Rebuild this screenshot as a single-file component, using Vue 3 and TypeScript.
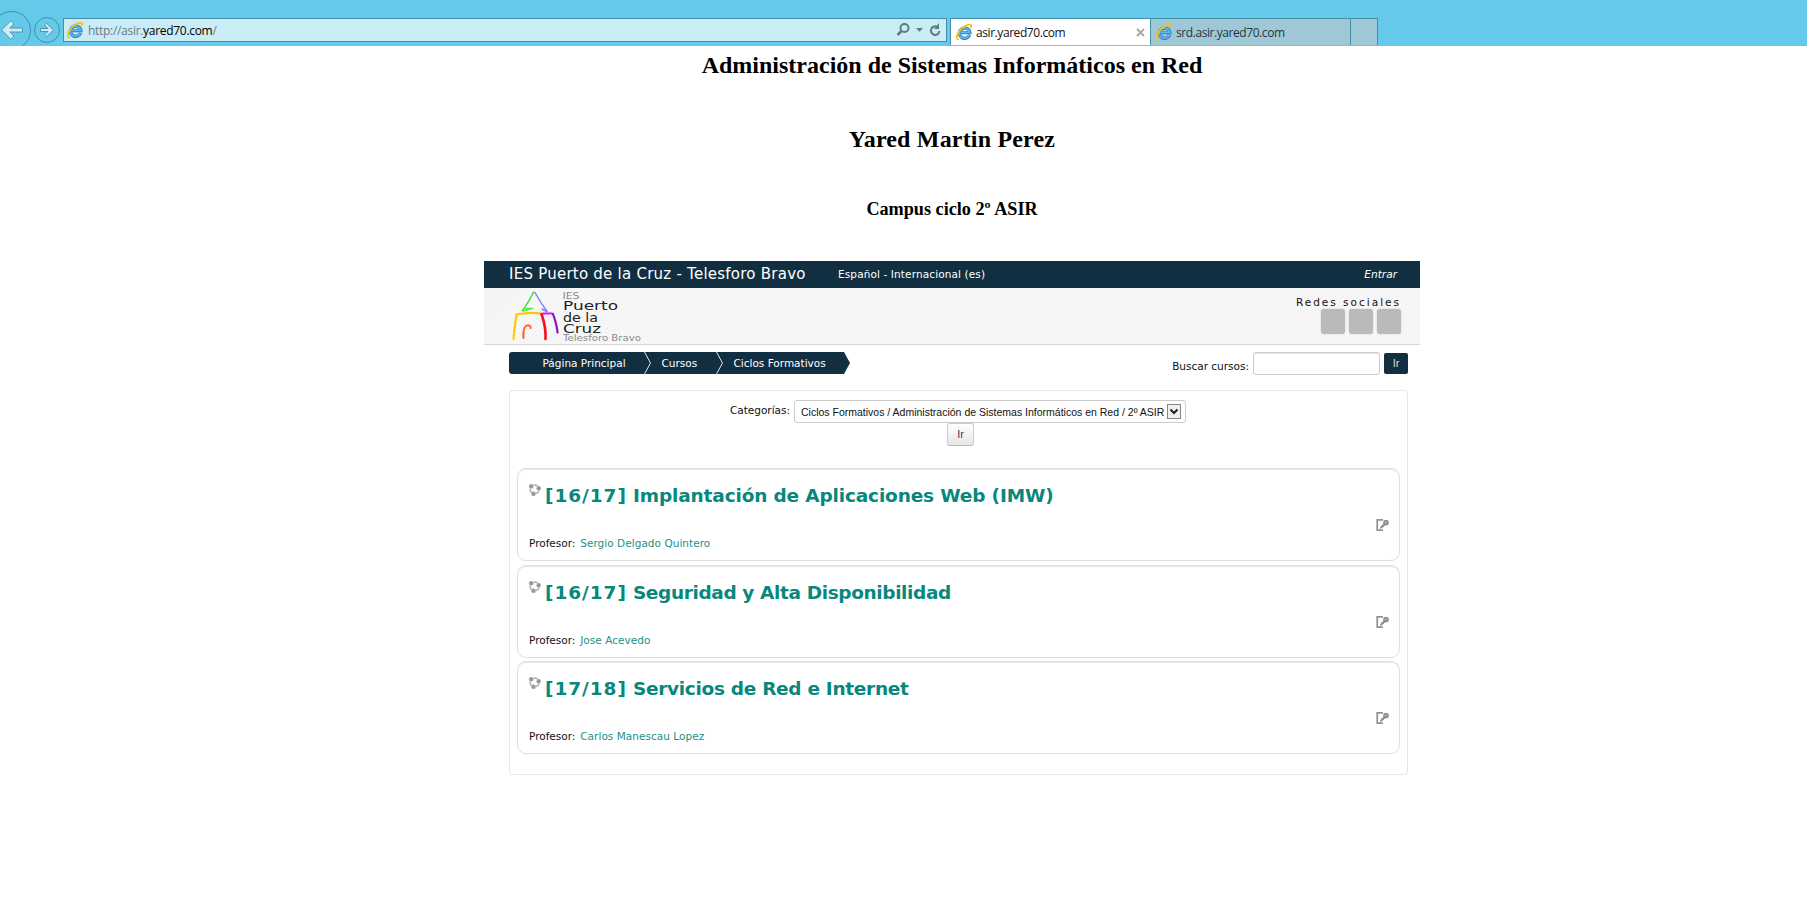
<script setup lang="ts">
interface Course {
  term: string
  title: string
  teacher: string
  code: string
}

const crumbs: string[] = ['Página Principal', 'Cursos', 'Ciclos Formativos']

const courses: Course[] = [
  { term: '[16/17]', title: 'Implantación de Aplicaciones Web (IMW)', teacher: 'Sergio Delgado Quintero', code: 'imw' },
  { term: '[16/17]', title: 'Seguridad y Alta Disponibilidad', teacher: 'Jose Acevedo', code: 'sad' },
  { term: '[17/18]', title: 'Servicios de Red e Internet', teacher: 'Carlos Manescau Lopez', code: 'sri' },
]

const tabs: { label: string; active: boolean }[] = [
  { label: 'asir.yared70.com', active: true },
  { label: 'srd.asir.yared70.com', active: false },
]
</script>

<template>
  <div class="page">
    <svg width="0" height="0" class="defs">
      <symbol id="ie" viewBox="0 0 16 16">
        <path d="M13.600 10.800A5.200 5.200 0 1 1 13.800 8.600H4.600" fill="none" stroke="#2f86c4" stroke-width="3.400" />
        <path d="M13.400 10.600A5.200 5.200 0 1 1 13.600 8.400H4.600" fill="none" stroke="#62b8ea" stroke-width="1.700" />
        <path d="M2.800 15.200C-1 15.600 1 8.600 5.400 4.600 9.600 .6 14.800-.4 15.200 1.600c.1.800 0 1.600-.3 2.400" fill="none" stroke="#f7c11a" stroke-width="1.800" />
      </symbol>
    </svg>

    <header class="chrome">
      <svg class="nav-btns" width="63" height="46" viewBox="0 0 63 46" fill="none">
        <circle cx="11.500" cy="30.500" r="19" stroke="#3f8fae" />
        <path d="M22.500 28H9.800L14 24 11 20.500 1.500 30 11 39.500 14 36 9.800 32H22.500Z" fill="#cdeef8" stroke="#4a94b0" />
        <circle cx="47" cy="30" r="12.500" stroke="#3f8fae" />
        <path d="M40.500 28.500H48L44.500 25 46.500 23.300 53.500 30 46.500 36.700 44.500 35 48 31.500H40.500Z" fill="#cdeef8" stroke="#4a94b0" />
      </svg>
      <div class="address">
        <svg class="ie" width="16" height="16"><use href="#ie" /></svg>
        <span class="url">http://asir.<b>yared70.com</b>/</span>
        <svg class="tools" width="46" height="16" viewBox="0 0 46 16" fill="none" stroke="#5d7b86">
          <circle cx="8.500" cy="6" r="4" stroke-width="2" />
          <path d="M5.500 9 1.500 13" stroke-width="2.500" />
          <path d="M20 6h7l-3.500 3.800z" fill="#5d7b86" stroke="none" />
          <path d="M41.500 5A4.300 4.300 0 1 0 43.500 9" stroke-width="2" />
          <path d="M43 1v6h-5z" fill="#5d7b86" stroke="none" />
        </svg>
      </div>
      <nav class="tabs">
        <div v-for="tab in tabs" :key="tab.label" class="tab" :class="{ active: tab.active }">
          <svg class="ie" width="16" height="16"><use href="#ie" /></svg>
          <span class="tab-label">{{ tab.label }}</span>
          <svg v-if="tab.active" class="close" width="9" height="9" viewBox="0 0 9 9"><path d="M1 1l7 7M8 1L1 8" stroke="#a9a9a9" stroke-width="2" /></svg>
        </div>
        <div class="tab new-tab"></div>
      </nav>
    </header>

    <main class="body">
      <h1 class="school">Administración de Sistemas Informáticos en Red</h1>
      <h1 class="author">Yared Martin Perez</h1>
      <h2 class="subtitle">Campus ciclo 2º ASIR</h2>

      <section class="campus">
        <div class="topbar">
          <span class="site">IES Puerto de la Cruz - Telesforo Bravo</span>
          <span class="lang">Español - Internacional (es)</span>
          <span class="login">Entrar</span>
        </div>
        <div class="banner">
          <svg class="logo" width="140" height="56" viewBox="0 0 140 56" fill="none">
            <g stroke-linecap="round">
              <path d="M24.500 4C21 12 17 17 13.500 23" stroke="#3be03b" stroke-width="1.500" />
              <path d="M13.500 23L23.500 20.500M17 20.500h5" stroke="#4bf04b" stroke-width="1.700" />
              <path d="M26 4.500C30 12 34 18 38.500 24L33 21" stroke="#8585f2" stroke-width="1.500" />
              <path d="M4.500 51C5 43 6.500 34 7.500 26.500 16 24.800 24 24.500 32 25.500" stroke="#ffc60a" stroke-width="2.200" />
              <path d="M32.500 26C36 36 37 43 36.500 51" stroke="#f90c1c" stroke-width="2.600" />
              <path d="M34 25.500H43" stroke="#f20af2" stroke-width="2" />
              <path d="M44 26C46 32 48 37 48.500 44.500" stroke="#8f10c8" stroke-width="2.200" />
              <path d="M14.500 50C14 42 15.500 38 18 37.500 20 37 22 38 21.500 40" stroke="#fb6a3c" stroke-width="2.200" />
            </g>
            <g fill="#222" class="logo-text">
              <text x="53.500" y="11" font-size="9" textLength="17" lengthAdjust="spacingAndGlyphs" fill="#8a8a8a">IES</text>
              <text x="54" y="22" font-size="12" textLength="55" lengthAdjust="spacingAndGlyphs">Puerto</text>
              <text x="54" y="33.500" font-size="12" textLength="35" lengthAdjust="spacingAndGlyphs">de la</text>
              <text x="54" y="45" font-size="12" textLength="38" lengthAdjust="spacingAndGlyphs">Cruz</text>
              <text x="54" y="52.500" font-size="8" textLength="78" lengthAdjust="spacingAndGlyphs" fill="#8a8a8a">Telesforo Bravo</text>
            </g>
          </svg>
          <div class="social">
            <span class="social-label">Redes sociales</span>
            <div class="social-row"><i></i><i></i><i></i></div>
          </div>
        </div>

        <div class="crumb-row">
          <svg class="crumb-bg" width="341" height="22" viewBox="0 0 341 22">
            <path d="M3 0H335L341 11 335 22H3Q0 22 0 19V3Q0 0 3 0Z" fill="#122f41" />
            <path d="M135.500 0L141.500 11 135.500 22M207.500 0L213.500 11 207.500 22" fill="none" stroke="#dfe5e8" />
          </svg>
          <ul class="crumbs">
            <li v-for="crumb in crumbs" :key="crumb">{{ crumb }}</li>
          </ul>
          <div class="search">
            <label>Buscar cursos:</label>
            <span class="field"></span>
            <span class="go">Ir</span>
          </div>
        </div>

        <div class="panel">
          <div class="category">
            <label>Categorías:</label>
            <div class="select">
              <span>Ciclos Formativos / Administración de Sistemas Informáticos en Red / 2º ASIR</span>
              <svg width="14" height="15" viewBox="0 0 14 15"><rect x=".5" y=".5" width="13" height="14" fill="#efefef" stroke="#858585" /><path d="M3.500 5.500L7 9l3.500-3.500" fill="none" stroke="#222" stroke-width="2" /></svg>
            </div>
          </div>
          <div class="submit">Ir</div>

          <div class="courses">
            <article v-for="course in courses" :key="course.code" class="course">
              <div class="heading">
                <svg width="12" height="12" viewBox="0 0 12 12" fill="#999">
                  <circle cx="2.200" cy="2.200" r="2.200" /><circle cx="9.700" cy="4.200" r="2.200" /><circle cx="4.500" cy="9.700" r="2.300" />
                  <path d="M4.500 1.300Q7 .6 8.500 2M1.300 4.500Q.8 7 2.500 8.800M7 9.700Q9.500 9 10 6.500" fill="none" stroke="#aaa" stroke-width="1.400" />
                </svg>
                <h3 :class="course.code"><span class="term">{{ course.term }}</span> {{ course.title }}</h3>
              </div>
              <svg class="enter" width="13" height="12" viewBox="0 0 13 12" fill="none" stroke="#939393">
                <path d="M7 .9H1.200V11.100H7" stroke-width="1.700" />
                <path d="M4.200 9.200L5 7.500 9 3.600 10 5 6.500 8.500Z" fill="#939393" stroke-width="1" />
                <circle cx="10" cy="3.600" r="1.700" stroke-width="2.400" />
              </svg>
              <p>Profesor: <a>{{ course.teacher }}</a></p>
            </article>
          </div>
        </div>
      </section>
    </main>
  </div>
</template>

<style>
body {
  margin: 0;
  background: #fff;
}
</style>

<style scoped>
.page {
  position: relative;
  width: 1807px;
  height: 922px;
  overflow: hidden;
  background: #fff;
  color: #111;
}
.page * {
  box-sizing: border-box;
}
.defs {
  position: absolute;
}
.chrome {
  display: flex;
  height: 46px;
  background: #65caea;
  font: 12px/16px "Open Sans", "Noto Sans", sans-serif;
}
.nav-btns {
  display: block;
  flex: none;
}
.address {
  display: flex;
  align-items: center;
  width: 884px;
  height: 24px;
  margin-top: 18px;
  padding: 0 3px;
  border: 1px solid #468fa8;
  background: #c9ecf6;
}
.ie {
  flex: none;
}
.url {
  margin: 2px 0 0 5px;
  color: #6c7c82;
  letter-spacing: -0.300px;
  white-space: nowrap;
}
.url b {
  color: #000;
  font-weight: 400;
}
.tools {
  margin-left: auto;
  margin-right: 1px;
}
.tabs {
  display: flex;
  height: 27px;
  margin: 18px 0 0 3px;
}
.tab {
  display: flex;
  align-items: center;
  width: 200px;
  padding-left: 5px;
  border-top: 1px solid #468fa8;
  border-left: 1px solid #468fa8;
  background: #9fc7d6;
  color: #26383f;
}
.tab.active {
  background: #fff;
  color: #111;
}
.tab-label {
  margin: 2px 0 0 4px;
  letter-spacing: -0.430px;
  white-space: nowrap;
}
.close {
  margin: 0 5px 0 auto;
}
.new-tab {
  width: 28px;
  border-right: 1px solid #468fa8;
}
.body {
  display: flex;
  flex-direction: column;
  align-items: center;
  width: 1807px;
  padding-left: 97px;
}
.body h1,
.body h2 {
  margin: 0;
  color: #000;
  font-family: "Liberation Serif", serif;
  font-weight: 700;
  white-space: nowrap;
}
.body h1 {
  height: 28px;
  margin-top: 5px;
  font-size: 24px;
  line-height: 28px;
}
.body h1.author {
  margin-top: 46px;
  letter-spacing: 0.180px;
}
.body h2 {
  height: 22px;
  margin-top: 45px;
  font-size: 18.200px;
  line-height: 22px;
}
.campus {
  width: 936px;
  margin-top: 41px;
  font: 11px/14px "DejaVu Sans", Verdana, sans-serif;
}
.topbar {
  display: flex;
  align-items: center;
  height: 27px;
  padding: 0 23px 2px 25px;
  background: #122f41;
  color: #fff;
  white-space: nowrap;
}
.site {
  width: 329px;
  font-size: 15px;
  letter-spacing: 0.240px;
}
.lang {
  font-size: 10.500px;
  letter-spacing: 0.120px;
}
.login {
  margin-left: auto;
  font-size: 10.600px;
  font-style: italic;
}
.banner {
  display: flex;
  justify-content: space-between;
  height: 57px;
  padding: 0 19px 0 25px;
  border-bottom: 1px solid #d6d6d6;
  background: repeating-linear-gradient(135deg, #fafafa 0 1.400px, #f2f2f2 1.400px 2.830px);
}
.logo-text {
  font-family: "DejaVu Sans", sans-serif;
}
.social {
  padding-top: 7px;
  text-align: right;
}
.social-label {
  display: block;
  height: 14px;
  font-size: 10.500px;
  letter-spacing: 2px;
  white-space: nowrap;
}
.social-row {
  display: flex;
  justify-content: flex-end;
  gap: 4px;
}
.social-row i {
  width: 24px;
  height: 25px;
  border-radius: 3px;
  background: #bababa;
  box-shadow: 0 0 2px #ccc;
}
.crumb-row {
  position: relative;
  display: flex;
  height: 45px;
  padding: 7px 12px 0 25px;
}
.crumb-bg {
  position: absolute;
  left: 25px;
  top: 7px;
}
.crumbs {
  position: relative;
  display: flex;
  margin: 0;
  padding: 0 0 0 33.500px;
  color: #fff;
  font-size: 10.500px;
  line-height: 22px;
  list-style: none;
  white-space: nowrap;
}
.crumbs li:nth-child(1) {
  width: 119px;
}
.crumbs li:nth-child(2) {
  width: 72px;
}
.search {
  display: flex;
  height: 23px;
  margin-left: auto;
}
.search label {
  padding: 7px 4px 0 0;
  font-size: 10.500px;
  white-space: nowrap;
}
.field {
  width: 127px;
  border: 1px solid #ccc;
  border-radius: 3px;
  box-shadow: inset 0 1px 1px #e4e4e4;
}
.go {
  width: 24px;
  height: 21px;
  margin: 1px 0 0 4px;
  border-radius: 2px;
  background: #122f41;
  color: #ddd;
  font: 11px/21px "Liberation Sans", Arial, sans-serif;
  text-align: center;
}
.panel {
  width: 899px;
  height: 385px;
  margin-left: 25px;
  padding: 9px 7px 0;
  border: 1px solid #e6e6e6;
  border-radius: 4px;
}
.category {
  display: flex;
  justify-content: flex-end;
  height: 23px;
  padding-right: 214px;
}
.category label {
  padding: 3px 4px 0 0;
  font-size: 10.500px;
  white-space: nowrap;
}
.select {
  display: flex;
  align-items: center;
  justify-content: space-between;
  width: 392px;
  padding: 0 4px 0 6px;
  border: 1px solid #ccc;
  border-radius: 3px;
  font: 10.500px/14px "Liberation Sans", Arial, sans-serif;
  white-space: nowrap;
}
.submit {
  width: 27px;
  height: 23px;
  margin-left: 430px;
  border: 1px solid #ccc;
  border-bottom-color: #b8b8b8;
  border-radius: 3px;
  background: linear-gradient(#fff, #e6e6e6);
  color: #444;
  font: 11px/21px "Liberation Sans", Arial, sans-serif;
  text-align: center;
}
.courses {
  display: flex;
  flex-direction: column;
  gap: 3.700px;
  margin-top: 22px;
}
.course {
  position: relative;
  height: 93px;
  padding: 15px 11px 0;
  border: 1px solid #e0e0e0;
  border-radius: 9px;
  box-shadow: inset 0 1px 1px #e8e8e8;
}
.heading {
  display: flex;
  gap: 4px;
}
.heading h3 {
  margin: 0;
  color: #08877d;
  font-size: 18.500px;
  font-weight: 700;
  line-height: 24px;
  white-space: nowrap;
}
.heading .term {
  letter-spacing: 0.950px;
}
.imw {
  letter-spacing: -0.150px;
}
.sad {
  letter-spacing: -0.370px;
}
.sri {
  letter-spacing: -0.300px;
}
.enter {
  position: absolute;
  right: 10px;
  top: 50px;
}
.course p {
  margin: 28px 0 0;
  font-size: 10.500px;
  line-height: 14px;
}
.course a {
  margin-left: 1.500px;
  color: #1a9187;
  letter-spacing: 0.040px;
}
</style>
